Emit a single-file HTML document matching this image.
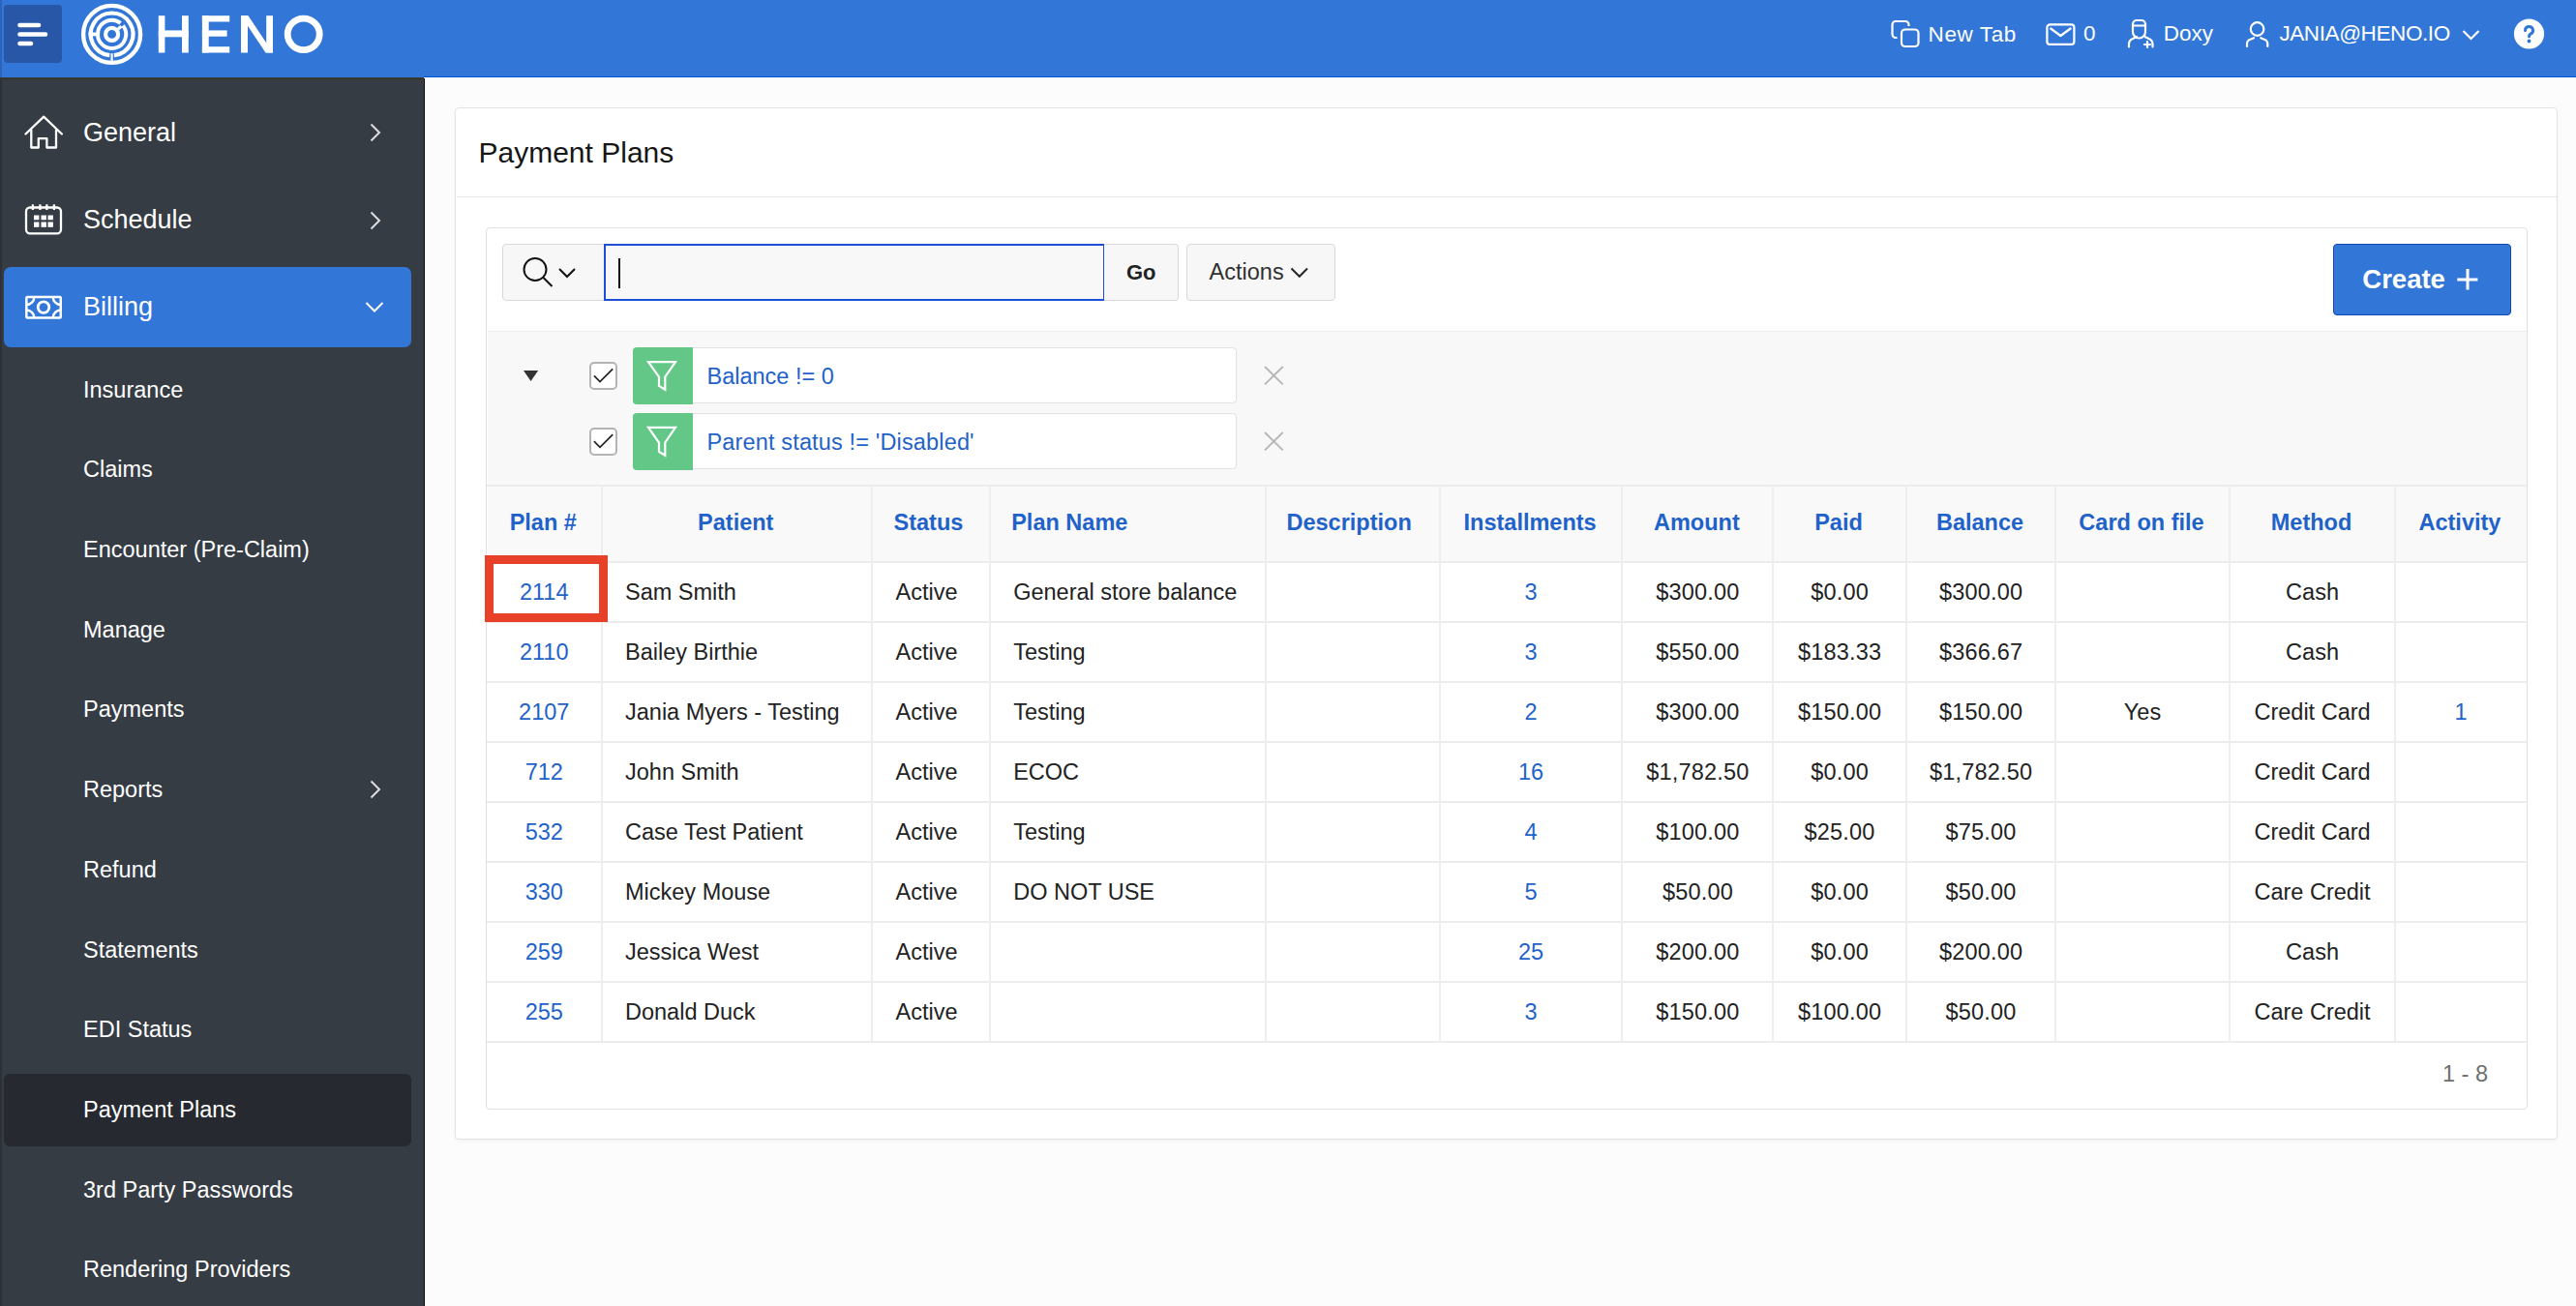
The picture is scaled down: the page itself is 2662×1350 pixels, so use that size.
<!DOCTYPE html>
<html><head><meta charset="utf-8"><title>Payment Plans</title>
<style>
html,body{margin:0;padding:0;width:2662px;height:1350px;overflow:hidden;background:#fcfcfc;}
body{position:relative;font-family:"Liberation Sans", sans-serif;}
.t{position:absolute;white-space:nowrap;}
.b{position:absolute;}
.s{position:absolute;overflow:visible;}
</style></head><body>
<div class="b" style="left:0.00px;top:0.00px;width:2662.00px;height:1350.00px;background:#fcfcfc;"></div>
<div class="b" style="left:0.00px;top:0.00px;width:2662.00px;height:79.50px;background:#3277d8;"></div>
<div class="b" style="left:438.00px;top:79.00px;width:2224.00px;height:1.00px;background:#0055d6;"></div>
<div class="b" style="left:0.00px;top:0.00px;width:2.00px;height:79.50px;background:#2b64b8;"></div>
<div class="b" style="left:0.00px;top:79.50px;width:438.00px;height:1270.50px;background:#363c44;"></div>
<div class="b" style="left:0.00px;top:80.80px;width:438.00px;height:1.20px;background:#33321a;"></div>
<div class="b" style="left:0.00px;top:81.00px;width:2.00px;height:1269.00px;background:#2c3138;"></div>
<div class="b" style="left:437.50px;top:80.50px;width:1.70px;height:1269.50px;background:#0b0b0b;"></div>
<div class="b" style="left:4.00px;top:5.00px;width:60.00px;height:60.00px;background:#2757a6;border-radius:4px;"></div>
<svg class="s" style="left:0px;top:0px;" width="70" height="70" viewBox="0 0 70 70"><g stroke="#fff" stroke-width="4.6" stroke-linecap="round"><line x1="20.5" y1="26" x2="40" y2="26"/><line x1="20.5" y1="35.5" x2="47" y2="35.5"/><line x1="20.5" y1="45" x2="32" y2="45"/></g></svg>
<svg class="s" style="left:80px;top:0px;" width="72" height="72" viewBox="0 0 72 72"><g fill="none" stroke="#fff"><circle cx="35.6" cy="35.4" r="29.5" stroke-width="4.4"/><path d="M33.31 57.18 A21.9 21.9 0 1 1 37.89 57.18" stroke-width="4.2"/><path d="M47.10 26.41 A14.6 14.6 0 1 1 44.59 23.90" stroke-width="3.9"/><circle cx="35.6" cy="35.4" r="6.5" stroke-width="4.1"/><line x1="42.03" y1="30.00" x2="45.41" y2="27.17" stroke-width="3.2"/><line x1="11.600000000000001" y1="35.4" x2="23.1" y2="35.4" stroke-width="3.8"/><line x1="35.6" y1="55.2" x2="35.6" y2="62.9" stroke-width="2.2"/></g></svg>
<svg class="s" style="left:160px;top:10px;" width="180" height="50" viewBox="0 0 180 50"><g fill="#fff"><rect x="3.8" y="6.2" width="6.6" height="38.3"/><rect x="28" y="6.2" width="6.8" height="38.3"/><rect x="3.8" y="21.4" width="31" height="6.9"/><rect x="48.9" y="6.2" width="6.8" height="38.3"/><rect x="48.9" y="6.2" width="28.3" height="6.3"/><rect x="48.9" y="21.4" width="25.7" height="6.3"/><rect x="48.9" y="38.2" width="28.3" height="6.3"/><rect x="89" y="6.2" width="7" height="38.3"/><rect x="115.2" y="6.2" width="6.8" height="38.3"/><polygon points="89,6.2 96.5,6.2 122,44.5 114.5,44.5"/></g><ellipse cx="153.7" cy="25.35" rx="16.5" ry="16.3" fill="none" stroke="#fff" stroke-width="6.8"/></svg>
<svg class="s" style="left:1950px;top:15px;" width="40" height="40" viewBox="0 0 40 40"><g fill="none" stroke="#fff" stroke-width="2.2"><path d="M10.5 24 h-1.5 a3.5 3.5 0 0 1 -3.5 -3.5 v-10 a3.5 3.5 0 0 1 3.5 -3.5 h10 a3.5 3.5 0 0 1 3.5 3.5 v1.5"/><rect x="15" y="15.5" width="17.5" height="17.5" rx="3.8"/></g></svg>
<div class="t" style="left:1992.60px;top:24.75px;font-size:22.5px;line-height:22.5px;color:#fff;letter-spacing:0.6px;">New Tab</div>
<svg class="s" style="left:2110px;top:15px;" width="40" height="40" viewBox="0 0 40 40"><g fill="none" stroke="#fff" stroke-width="2.2" stroke-linejoin="round"><rect x="5.4" y="10.3" width="28" height="20.6" rx="3"/><path d="M8.5 14 L19.4 22 L30.3 14"/></g></svg>
<div class="t" style="left:2152.90px;top:24.15px;font-size:22.5px;line-height:22.5px;color:#fff;">0</div>
<svg class="s" style="left:2195px;top:15px;" width="35" height="40" viewBox="0 0 35 40"><g fill="none" stroke="#fff" stroke-width="2.2" stroke-linecap="round"><path d="M9 18 v-8 a4 4 0 0 1 4 -4 h5 a4 4 0 0 1 4 4 v8 a6.5 6.5 0 0 1 -13 0 z"/><line x1="9" y1="11.5" x2="22" y2="11.5"/><path d="M5 33.5 v-3 a6 6 0 0 1 4 -5.5 l4 -2"/><path d="M29.5 33.5 v-3 a6 6 0 0 0 -4 -5.5 l-4 -2"/><line x1="24" y1="28" x2="24" y2="34"/><line x1="21" y1="31" x2="27" y2="31"/></g></svg>
<div class="t" style="left:2235.80px;top:23.95px;font-size:22.5px;line-height:22.5px;color:#fff;">Doxy</div>
<svg class="s" style="left:2315px;top:15px;" width="35" height="40" viewBox="0 0 35 40"><g fill="none" stroke="#fff" stroke-width="2.2" stroke-linecap="round"><circle cx="17.6" cy="15" r="6.8"/><path d="M7 33 v-2.5 a5 5 0 0 1 3.5 -4.8 l3.5 -1.5"/><path d="M28.3 33 v-2.5 a5 5 0 0 0 -3.5 -4.8 l-3.5 -1.5"/></g></svg>
<div class="t" style="left:2355.40px;top:24.25px;font-size:22.5px;line-height:22.5px;color:#fff;letter-spacing:-0.4px;">JANIA@HENO.IO</div>
<svg class="s" style="left:2540px;top:25px;" width="30" height="20" viewBox="0 0 30 20"><path d="M5.5 7 L13.5 15 L21.5 7" fill="none" stroke="#fff" stroke-width="2.2"/></svg>
<svg class="s" style="left:2596px;top:18px;" width="36" height="36" viewBox="0 0 36 36"><circle cx="17.5" cy="17" r="15.6" fill="#fff"/><path d="M13.5 13.5 a4 4 0 1 1 5.5 3.7 c-1.2 0.6 -1.5 1.2 -1.5 2.6" fill="none" stroke="#3277d8" stroke-width="3" stroke-linecap="round"/><circle cx="17.5" cy="24.5" r="1.9" fill="#3277d8"/></svg>
<div class="b" style="left:4.00px;top:276.00px;width:421.00px;height:83.00px;background:#3277d8;border-radius:7px;"></div>
<div class="b" style="left:4.00px;top:1110.00px;width:420.50px;height:74.50px;background:#262a30;border-radius:6px;"></div>
<div class="t" style="left:86.00px;top:123.84px;font-size:27px;line-height:27px;color:#fff;">General</div>
<div class="t" style="left:86.00px;top:213.94px;font-size:27px;line-height:27px;color:#fff;">Schedule</div>
<div class="t" style="left:86.00px;top:304.14px;font-size:27px;line-height:27px;color:#fff;">Billing</div>
<div class="t" style="left:86.00px;top:391.81px;font-size:23.5px;line-height:23.5px;color:#fff;">Insurance</div>
<div class="t" style="left:86.00px;top:474.48px;font-size:23.5px;line-height:23.5px;color:#fff;">Claims</div>
<div class="t" style="left:86.00px;top:557.15px;font-size:23.5px;line-height:23.5px;color:#fff;">Encounter (Pre-Claim)</div>
<div class="t" style="left:86.00px;top:639.82px;font-size:23.5px;line-height:23.5px;color:#fff;">Manage</div>
<div class="t" style="left:86.00px;top:722.49px;font-size:23.5px;line-height:23.5px;color:#fff;">Payments</div>
<div class="t" style="left:86.00px;top:805.16px;font-size:23.5px;line-height:23.5px;color:#fff;">Reports</div>
<div class="t" style="left:86.00px;top:887.83px;font-size:23.5px;line-height:23.5px;color:#fff;">Refund</div>
<div class="t" style="left:86.00px;top:970.50px;font-size:23.5px;line-height:23.5px;color:#fff;">Statements</div>
<div class="t" style="left:86.00px;top:1053.17px;font-size:23.5px;line-height:23.5px;color:#fff;">EDI Status</div>
<div class="t" style="left:86.00px;top:1135.84px;font-size:23.5px;line-height:23.5px;color:#fff;">Payment Plans</div>
<div class="t" style="left:86.00px;top:1218.51px;font-size:23.5px;line-height:23.5px;color:#fff;">3rd Party Passwords</div>
<div class="t" style="left:86.00px;top:1301.18px;font-size:23.5px;line-height:23.5px;color:#fff;">Rendering Providers</div>
<svg class="s" style="left:20px;top:110px;" width="50" height="50" viewBox="0 0 50 50"><g fill="none" stroke="#fff" stroke-width="2.3" stroke-linejoin="round" stroke-linecap="round"><path d="M6.5 28.5 L25.2 10.7 L43.9 28.5"/><path d="M12.3 24.5 V42.5 H19.8 V33.2 H28.4 V42.5 H38 V24.5"/></g></svg>
<svg class="s" style="left:20px;top:205px;" width="50" height="45" viewBox="0 0 50 45"><g fill="none" stroke="#fff" stroke-width="2.3"><rect x="7" y="9.5" width="36" height="26.8" rx="4"/><line x1="13.9" y1="6.3" x2="13.9" y2="12"/><line x1="21.4" y1="6.3" x2="21.4" y2="12"/><line x1="28.4" y1="6.3" x2="28.4" y2="12"/><line x1="35.9" y1="6.3" x2="35.9" y2="12"/></g><g fill="#fff"><rect x="15" y="17.5" width="5.4" height="4.8"/><rect x="22.5" y="17.5" width="5.4" height="4.8"/><rect x="29.5" y="17.5" width="5.4" height="4.8"/><rect x="15" y="24.5" width="5.4" height="5.3"/><rect x="22.5" y="24.5" width="5.4" height="5.3"/><rect x="29.5" y="24.5" width="5.4" height="5.3"/></g></svg>
<svg class="s" style="left:20px;top:300px;" width="50" height="36" viewBox="0 0 50 36"><g fill="none" stroke="#fff" stroke-width="2.5"><rect x="7.35" y="7.05" width="35.40" height="21.50" rx="1"/><circle cx="25" cy="17.6" r="5.8" stroke-width="2.8"/><path d="M7.35 15.05 A8 8 0 0 0 15.35 7.05 M34.75 7.05 A8 8 0 0 0 42.75 15.05 M7.35 20.55 A8 8 0 0 1 15.35 28.55 M34.75 28.55 A8 8 0 0 1 42.75 20.55"/></g></svg>
<svg class="s" style="left:378px;top:124.5px;" width="20" height="24" viewBox="0 0 20 24"><path d="M5.5 3.5 L14 12 L5.5 20.5" fill="none" stroke="#ddd" stroke-width="2"/></svg>
<svg class="s" style="left:378px;top:215.5px;" width="20" height="24" viewBox="0 0 20 24"><path d="M5.5 3.5 L14 12 L5.5 20.5" fill="none" stroke="#ddd" stroke-width="2"/></svg>
<svg class="s" style="left:378px;top:804px;" width="20" height="24" viewBox="0 0 20 24"><path d="M5.5 3.5 L14 12 L5.5 20.5" fill="none" stroke="#ddd" stroke-width="2"/></svg>
<svg class="s" style="left:376px;top:308px;" width="22" height="20" viewBox="0 0 22 20"><path d="M2.5 5 L11 13.5 L19.5 5" fill="none" stroke="#fff" stroke-width="2"/></svg>
<div class="b" style="left:469.80px;top:111.00px;width:2173.20px;height:1067.30px;background:#fff;border:1.5px solid #e3e3e3;border-radius:4px;box-sizing:border-box;box-shadow:0 2px 4px rgba(0,0,0,0.035);"></div>
<div class="b" style="left:471.50px;top:203.00px;width:2170.50px;height:1.00px;background:#e8e8e8;"></div>
<div class="t" style="left:494.50px;top:143.10px;font-size:30px;line-height:30px;color:#161616;">Payment Plans</div>
<div class="b" style="left:502.00px;top:235.00px;width:2109.50px;height:911.50px;background:#fff;border:1.5px solid #e0e0e0;border-radius:4px;box-sizing:border-box;"></div>
<div class="b" style="left:503.50px;top:342.00px;width:2107.00px;height:160.00px;background:#f8f8f8;border-top:1px solid #ececec;box-sizing:border-box;"></div>
<div class="b" style="left:519.00px;top:252.00px;width:107.00px;height:59.00px;background:#f7f7f7;border:1px solid #d8d8d8;border-radius:4px 0 0 4px;box-sizing:border-box;"></div>
<svg class="s" style="left:540px;top:262px;" width="70" height="40" viewBox="0 0 70 40"><g fill="none" stroke="#111" stroke-width="2"><circle cx="13" cy="16.5" r="11.5"/><line x1="21.5" y1="25" x2="30.5" y2="34"/><path d="M38 16 L46 24 L54 16"/></g></svg>
<div class="b" style="left:623.50px;top:252.00px;width:518.50px;height:59.00px;background:#f8f8f8;border:2px solid #1f4fd8;box-sizing:border-box;"></div>
<div class="b" style="left:638.50px;top:266.50px;width:2.00px;height:31.00px;background:#111;"></div>
<div class="b" style="left:1141.00px;top:252.00px;width:76.50px;height:59.00px;background:#f7f7f7;border:1px solid #d8d8d8;border-left:none;border-radius:0 4px 4px 0;box-sizing:border-box;"></div>
<div class="t" style="left:1141.00px;top:271.38px;font-size:22px;line-height:22px;color:#222;font-weight:bold;width:76.50px;text-align:center;">Go</div>
<div class="b" style="left:1226.00px;top:252.00px;width:154.00px;height:59.00px;background:#f7f7f7;border:1px solid #d8d8d8;border-radius:4px;box-sizing:border-box;"></div>
<div class="t" style="left:1249.60px;top:270.41px;font-size:23.5px;line-height:23.5px;color:#303030;">Actions</div>
<svg class="s" style="left:1330px;top:270px;" width="26" height="22" viewBox="0 0 26 22"><path d="M4.5 7.5 L12.8 15.8 L21 7.5" fill="none" stroke="#262626" stroke-width="2"/></svg>
<div class="b" style="left:2411.00px;top:252.00px;width:184.00px;height:74.00px;background:#3277d8;border:1.5px solid #0f47b4;border-radius:4px;box-sizing:border-box;"></div>
<div class="t" style="left:2441.30px;top:275.42px;font-size:27.5px;line-height:27.5px;color:#fff;font-weight:bold;">Create</div>
<svg class="s" style="left:2535px;top:274px;" width="30" height="30" viewBox="0 0 30 30"><g stroke="#fff" stroke-width="3"><line x1="4.3" y1="15" x2="25.4" y2="15"/><line x1="15" y1="4" x2="15" y2="25.5"/></g></svg>
<svg class="s" style="left:535px;top:375px;" width="28" height="25" viewBox="0 0 28 25"><polygon points="6,7.9 21.1,7.9 13.6,18.9" fill="#333"/></svg>
<div class="b" style="left:609.00px;top:373.95px;width:29.00px;height:29.00px;background:#fff;border:2px solid #b4b4b4;border-radius:5px;box-sizing:border-box;"></div>
<svg class="s" style="left:606px;top:370px;" width="36" height="36" viewBox="0 0 36 36"><path d="M7.9 18.45 L14 24.55 L27.2 11.45" fill="none" stroke="#222" stroke-width="1.7"/></svg>
<div class="b" style="left:654.00px;top:359.40px;width:624.00px;height:58.10px;background:#fff;border:1px solid #e2e2e2;border-radius:4px;box-sizing:border-box;"></div>
<div class="b" style="left:654.00px;top:358.90px;width:61.50px;height:59.10px;background:#63c787;border-radius:4px 0 0 4px;"></div>
<svg class="s" style="left:654px;top:359px;" width="62" height="60" viewBox="0 0 62 60"><path d="M16 15.2 H44 L33.3 30.5 V43.8 L27 40.0 V30.5 Z" fill="none" stroke="#fff" stroke-width="2.2" stroke-linejoin="miter"/></svg>
<div class="t" style="left:730.50px;top:377.76px;font-size:23.5px;line-height:23.5px;color:#1f62c9;">Balance != 0</div>
<svg class="s" style="left:1300px;top:372px;" width="34" height="34" viewBox="0 0 34 34"><g stroke="#b5b5b5" stroke-width="1.8"><line x1="7" y1="7" x2="25.7" y2="25.4"/><line x1="25.7" y1="7" x2="7" y2="25.4"/></g></svg>
<div class="b" style="left:609.00px;top:441.70px;width:29.00px;height:29.00px;background:#fff;border:2px solid #b4b4b4;border-radius:5px;box-sizing:border-box;"></div>
<svg class="s" style="left:606px;top:438px;" width="36" height="36" viewBox="0 0 36 36"><path d="M7.9 18.20 L14 24.30 L27.2 11.20" fill="none" stroke="#222" stroke-width="1.7"/></svg>
<div class="b" style="left:654.00px;top:427.00px;width:624.00px;height:58.40px;background:#fff;border:1px solid #e2e2e2;border-radius:4px;box-sizing:border-box;"></div>
<div class="b" style="left:654.00px;top:426.50px;width:61.50px;height:59.40px;background:#63c787;border-radius:4px 0 0 4px;"></div>
<svg class="s" style="left:654px;top:427px;" width="62" height="60" viewBox="0 0 62 60"><path d="M16 14.8 H44 L33.3 30.5 V43.8 L27 40.0 V30.5 Z" fill="none" stroke="#fff" stroke-width="2.2" stroke-linejoin="miter"/></svg>
<div class="t" style="left:730.50px;top:445.51px;font-size:23.5px;line-height:23.5px;color:#1f62c9;letter-spacing:0.15px;">Parent status != 'Disabled'</div>
<svg class="s" style="left:1300px;top:440px;" width="34" height="34" viewBox="0 0 34 34"><g stroke="#b5b5b5" stroke-width="1.8"><line x1="7" y1="7" x2="25.7" y2="25.4"/><line x1="25.7" y1="7" x2="7" y2="25.4"/></g></svg>
<div class="b" style="left:503.50px;top:502.00px;width:2107.00px;height:79.00px;background:#f9f9f9;"></div>
<div class="b" style="left:503.00px;top:501.00px;width:2108.00px;height:2.00px;background:#ececec;"></div>
<div class="b" style="left:503.00px;top:580.00px;width:2108.00px;height:2.00px;background:#ececec;"></div>
<div class="b" style="left:503.00px;top:642.00px;width:2108.00px;height:2.00px;background:#ececec;"></div>
<div class="b" style="left:503.00px;top:704.00px;width:2108.00px;height:2.00px;background:#ececec;"></div>
<div class="b" style="left:503.00px;top:766.00px;width:2108.00px;height:2.00px;background:#ececec;"></div>
<div class="b" style="left:503.00px;top:828.00px;width:2108.00px;height:2.00px;background:#ececec;"></div>
<div class="b" style="left:503.00px;top:890.00px;width:2108.00px;height:2.00px;background:#ececec;"></div>
<div class="b" style="left:503.00px;top:952.00px;width:2108.00px;height:2.00px;background:#ececec;"></div>
<div class="b" style="left:503.00px;top:1014.00px;width:2108.00px;height:2.00px;background:#ececec;"></div>
<div class="b" style="left:503.00px;top:1076.00px;width:2108.00px;height:2.00px;background:#ececec;"></div>
<div class="b" style="left:620.50px;top:502.00px;width:2.00px;height:575.00px;background:#eeeeee;"></div>
<div class="b" style="left:900.00px;top:502.00px;width:2.00px;height:575.00px;background:#eeeeee;"></div>
<div class="b" style="left:1021.70px;top:502.00px;width:2.00px;height:575.00px;background:#eeeeee;"></div>
<div class="b" style="left:1306.50px;top:502.00px;width:2.00px;height:575.00px;background:#eeeeee;"></div>
<div class="b" style="left:1486.80px;top:502.00px;width:2.00px;height:575.00px;background:#eeeeee;"></div>
<div class="b" style="left:1675.40px;top:502.00px;width:2.00px;height:575.00px;background:#eeeeee;"></div>
<div class="b" style="left:1831.30px;top:502.00px;width:2.00px;height:575.00px;background:#eeeeee;"></div>
<div class="b" style="left:1968.70px;top:502.00px;width:2.00px;height:575.00px;background:#eeeeee;"></div>
<div class="b" style="left:2123.30px;top:502.00px;width:2.00px;height:575.00px;background:#eeeeee;"></div>
<div class="b" style="left:2302.70px;top:502.00px;width:2.00px;height:575.00px;background:#eeeeee;"></div>
<div class="b" style="left:2474.40px;top:502.00px;width:2.00px;height:575.00px;background:#eeeeee;"></div>
<div class="t" style="left:502.00px;top:528.71px;font-size:23.5px;line-height:23.5px;color:#1f62c9;font-weight:bold;width:118.50px;text-align:center;">Plan #</div>
<div class="t" style="left:620.50px;top:528.71px;font-size:23.5px;line-height:23.5px;color:#1f62c9;font-weight:bold;width:279.50px;text-align:center;">Patient</div>
<div class="t" style="left:923.50px;top:528.71px;font-size:23.5px;line-height:23.5px;color:#1f62c9;font-weight:bold;">Status</div>
<div class="t" style="left:1045.20px;top:528.71px;font-size:23.5px;line-height:23.5px;color:#1f62c9;font-weight:bold;">Plan Name</div>
<div class="t" style="left:1304.00px;top:528.71px;font-size:23.5px;line-height:23.5px;color:#1f62c9;font-weight:bold;width:180.30px;text-align:center;">Description</div>
<div class="t" style="left:1486.80px;top:528.71px;font-size:23.5px;line-height:23.5px;color:#1f62c9;font-weight:bold;width:188.60px;text-align:center;">Installments</div>
<div class="t" style="left:1675.40px;top:528.71px;font-size:23.5px;line-height:23.5px;color:#1f62c9;font-weight:bold;width:155.90px;text-align:center;">Amount</div>
<div class="t" style="left:1831.30px;top:528.71px;font-size:23.5px;line-height:23.5px;color:#1f62c9;font-weight:bold;width:137.40px;text-align:center;">Paid</div>
<div class="t" style="left:1968.70px;top:528.71px;font-size:23.5px;line-height:23.5px;color:#1f62c9;font-weight:bold;width:154.60px;text-align:center;">Balance</div>
<div class="t" style="left:2123.30px;top:528.71px;font-size:23.5px;line-height:23.5px;color:#1f62c9;font-weight:bold;width:179.40px;text-align:center;">Card on file</div>
<div class="t" style="left:2302.70px;top:528.71px;font-size:23.5px;line-height:23.5px;color:#1f62c9;font-weight:bold;width:171.70px;text-align:center;">Method</div>
<div class="t" style="left:2474.40px;top:528.71px;font-size:23.5px;line-height:23.5px;color:#1f62c9;font-weight:bold;width:135.10px;text-align:center;">Activity</div>
<div class="t" style="left:503.00px;top:601.11px;font-size:23.5px;line-height:23.5px;color:#1f62c9;width:118.50px;text-align:center;">2114</div>
<div class="t" style="left:646.00px;top:601.11px;font-size:23.5px;line-height:23.5px;color:#222;">Sam Smith</div>
<div class="t" style="left:925.50px;top:601.11px;font-size:23.5px;line-height:23.5px;color:#222;">Active</div>
<div class="t" style="left:1047.20px;top:601.11px;font-size:23.5px;line-height:23.5px;color:#222;">General store balance</div>
<div class="t" style="left:1487.80px;top:601.11px;font-size:23.5px;line-height:23.5px;color:#1f62c9;width:188.60px;text-align:center;">3</div>
<div class="t" style="left:1676.40px;top:601.11px;font-size:23.5px;line-height:23.5px;color:#222;width:155.90px;text-align:center;letter-spacing:0.2px;text-indent:0.2px;">$300.00</div>
<div class="t" style="left:1832.30px;top:601.11px;font-size:23.5px;line-height:23.5px;color:#222;width:137.40px;text-align:center;letter-spacing:0.2px;text-indent:0.2px;">$0.00</div>
<div class="t" style="left:1969.70px;top:601.11px;font-size:23.5px;line-height:23.5px;color:#222;width:154.60px;text-align:center;letter-spacing:0.2px;text-indent:0.2px;">$300.00</div>
<div class="t" style="left:2303.70px;top:601.11px;font-size:23.5px;line-height:23.5px;color:#222;width:171.70px;text-align:center;">Cash</div>
<div class="t" style="left:503.00px;top:663.11px;font-size:23.5px;line-height:23.5px;color:#1f62c9;width:118.50px;text-align:center;">2110</div>
<div class="t" style="left:646.00px;top:663.11px;font-size:23.5px;line-height:23.5px;color:#222;">Bailey Birthie</div>
<div class="t" style="left:925.50px;top:663.11px;font-size:23.5px;line-height:23.5px;color:#222;">Active</div>
<div class="t" style="left:1047.20px;top:663.11px;font-size:23.5px;line-height:23.5px;color:#222;">Testing</div>
<div class="t" style="left:1487.80px;top:663.11px;font-size:23.5px;line-height:23.5px;color:#1f62c9;width:188.60px;text-align:center;">3</div>
<div class="t" style="left:1676.40px;top:663.11px;font-size:23.5px;line-height:23.5px;color:#222;width:155.90px;text-align:center;letter-spacing:0.2px;text-indent:0.2px;">$550.00</div>
<div class="t" style="left:1832.30px;top:663.11px;font-size:23.5px;line-height:23.5px;color:#222;width:137.40px;text-align:center;letter-spacing:0.2px;text-indent:0.2px;">$183.33</div>
<div class="t" style="left:1969.70px;top:663.11px;font-size:23.5px;line-height:23.5px;color:#222;width:154.60px;text-align:center;letter-spacing:0.2px;text-indent:0.2px;">$366.67</div>
<div class="t" style="left:2303.70px;top:663.11px;font-size:23.5px;line-height:23.5px;color:#222;width:171.70px;text-align:center;">Cash</div>
<div class="t" style="left:503.00px;top:725.11px;font-size:23.5px;line-height:23.5px;color:#1f62c9;width:118.50px;text-align:center;">2107</div>
<div class="t" style="left:646.00px;top:725.11px;font-size:23.5px;line-height:23.5px;color:#222;">Jania Myers - Testing</div>
<div class="t" style="left:925.50px;top:725.11px;font-size:23.5px;line-height:23.5px;color:#222;">Active</div>
<div class="t" style="left:1047.20px;top:725.11px;font-size:23.5px;line-height:23.5px;color:#222;">Testing</div>
<div class="t" style="left:1487.80px;top:725.11px;font-size:23.5px;line-height:23.5px;color:#1f62c9;width:188.60px;text-align:center;">2</div>
<div class="t" style="left:1676.40px;top:725.11px;font-size:23.5px;line-height:23.5px;color:#222;width:155.90px;text-align:center;letter-spacing:0.2px;text-indent:0.2px;">$300.00</div>
<div class="t" style="left:1832.30px;top:725.11px;font-size:23.5px;line-height:23.5px;color:#222;width:137.40px;text-align:center;letter-spacing:0.2px;text-indent:0.2px;">$150.00</div>
<div class="t" style="left:1969.70px;top:725.11px;font-size:23.5px;line-height:23.5px;color:#222;width:154.60px;text-align:center;letter-spacing:0.2px;text-indent:0.2px;">$150.00</div>
<div class="t" style="left:2124.30px;top:725.11px;font-size:23.5px;line-height:23.5px;color:#222;width:179.40px;text-align:center;">Yes</div>
<div class="t" style="left:2303.70px;top:725.11px;font-size:23.5px;line-height:23.5px;color:#222;width:171.70px;text-align:center;">Credit Card</div>
<div class="t" style="left:2475.40px;top:725.11px;font-size:23.5px;line-height:23.5px;color:#1f62c9;width:135.10px;text-align:center;">1</div>
<div class="t" style="left:503.00px;top:787.11px;font-size:23.5px;line-height:23.5px;color:#1f62c9;width:118.50px;text-align:center;">712</div>
<div class="t" style="left:646.00px;top:787.11px;font-size:23.5px;line-height:23.5px;color:#222;">John Smith</div>
<div class="t" style="left:925.50px;top:787.11px;font-size:23.5px;line-height:23.5px;color:#222;">Active</div>
<div class="t" style="left:1047.20px;top:787.11px;font-size:23.5px;line-height:23.5px;color:#222;">ECOC</div>
<div class="t" style="left:1487.80px;top:787.11px;font-size:23.5px;line-height:23.5px;color:#1f62c9;width:188.60px;text-align:center;">16</div>
<div class="t" style="left:1676.40px;top:787.11px;font-size:23.5px;line-height:23.5px;color:#222;width:155.90px;text-align:center;letter-spacing:0.2px;text-indent:0.2px;">$1,782.50</div>
<div class="t" style="left:1832.30px;top:787.11px;font-size:23.5px;line-height:23.5px;color:#222;width:137.40px;text-align:center;letter-spacing:0.2px;text-indent:0.2px;">$0.00</div>
<div class="t" style="left:1969.70px;top:787.11px;font-size:23.5px;line-height:23.5px;color:#222;width:154.60px;text-align:center;letter-spacing:0.2px;text-indent:0.2px;">$1,782.50</div>
<div class="t" style="left:2303.70px;top:787.11px;font-size:23.5px;line-height:23.5px;color:#222;width:171.70px;text-align:center;">Credit Card</div>
<div class="t" style="left:503.00px;top:849.11px;font-size:23.5px;line-height:23.5px;color:#1f62c9;width:118.50px;text-align:center;">532</div>
<div class="t" style="left:646.00px;top:849.11px;font-size:23.5px;line-height:23.5px;color:#222;">Case Test Patient</div>
<div class="t" style="left:925.50px;top:849.11px;font-size:23.5px;line-height:23.5px;color:#222;">Active</div>
<div class="t" style="left:1047.20px;top:849.11px;font-size:23.5px;line-height:23.5px;color:#222;">Testing</div>
<div class="t" style="left:1487.80px;top:849.11px;font-size:23.5px;line-height:23.5px;color:#1f62c9;width:188.60px;text-align:center;">4</div>
<div class="t" style="left:1676.40px;top:849.11px;font-size:23.5px;line-height:23.5px;color:#222;width:155.90px;text-align:center;letter-spacing:0.2px;text-indent:0.2px;">$100.00</div>
<div class="t" style="left:1832.30px;top:849.11px;font-size:23.5px;line-height:23.5px;color:#222;width:137.40px;text-align:center;letter-spacing:0.2px;text-indent:0.2px;">$25.00</div>
<div class="t" style="left:1969.70px;top:849.11px;font-size:23.5px;line-height:23.5px;color:#222;width:154.60px;text-align:center;letter-spacing:0.2px;text-indent:0.2px;">$75.00</div>
<div class="t" style="left:2303.70px;top:849.11px;font-size:23.5px;line-height:23.5px;color:#222;width:171.70px;text-align:center;">Credit Card</div>
<div class="t" style="left:503.00px;top:911.11px;font-size:23.5px;line-height:23.5px;color:#1f62c9;width:118.50px;text-align:center;">330</div>
<div class="t" style="left:646.00px;top:911.11px;font-size:23.5px;line-height:23.5px;color:#222;">Mickey Mouse</div>
<div class="t" style="left:925.50px;top:911.11px;font-size:23.5px;line-height:23.5px;color:#222;">Active</div>
<div class="t" style="left:1047.20px;top:911.11px;font-size:23.5px;line-height:23.5px;color:#222;">DO NOT USE</div>
<div class="t" style="left:1487.80px;top:911.11px;font-size:23.5px;line-height:23.5px;color:#1f62c9;width:188.60px;text-align:center;">5</div>
<div class="t" style="left:1676.40px;top:911.11px;font-size:23.5px;line-height:23.5px;color:#222;width:155.90px;text-align:center;letter-spacing:0.2px;text-indent:0.2px;">$50.00</div>
<div class="t" style="left:1832.30px;top:911.11px;font-size:23.5px;line-height:23.5px;color:#222;width:137.40px;text-align:center;letter-spacing:0.2px;text-indent:0.2px;">$0.00</div>
<div class="t" style="left:1969.70px;top:911.11px;font-size:23.5px;line-height:23.5px;color:#222;width:154.60px;text-align:center;letter-spacing:0.2px;text-indent:0.2px;">$50.00</div>
<div class="t" style="left:2303.70px;top:911.11px;font-size:23.5px;line-height:23.5px;color:#222;width:171.70px;text-align:center;">Care Credit</div>
<div class="t" style="left:503.00px;top:973.11px;font-size:23.5px;line-height:23.5px;color:#1f62c9;width:118.50px;text-align:center;">259</div>
<div class="t" style="left:646.00px;top:973.11px;font-size:23.5px;line-height:23.5px;color:#222;">Jessica West</div>
<div class="t" style="left:925.50px;top:973.11px;font-size:23.5px;line-height:23.5px;color:#222;">Active</div>
<div class="t" style="left:1487.80px;top:973.11px;font-size:23.5px;line-height:23.5px;color:#1f62c9;width:188.60px;text-align:center;">25</div>
<div class="t" style="left:1676.40px;top:973.11px;font-size:23.5px;line-height:23.5px;color:#222;width:155.90px;text-align:center;letter-spacing:0.2px;text-indent:0.2px;">$200.00</div>
<div class="t" style="left:1832.30px;top:973.11px;font-size:23.5px;line-height:23.5px;color:#222;width:137.40px;text-align:center;letter-spacing:0.2px;text-indent:0.2px;">$0.00</div>
<div class="t" style="left:1969.70px;top:973.11px;font-size:23.5px;line-height:23.5px;color:#222;width:154.60px;text-align:center;letter-spacing:0.2px;text-indent:0.2px;">$200.00</div>
<div class="t" style="left:2303.70px;top:973.11px;font-size:23.5px;line-height:23.5px;color:#222;width:171.70px;text-align:center;">Cash</div>
<div class="t" style="left:503.00px;top:1035.11px;font-size:23.5px;line-height:23.5px;color:#1f62c9;width:118.50px;text-align:center;">255</div>
<div class="t" style="left:646.00px;top:1035.11px;font-size:23.5px;line-height:23.5px;color:#222;">Donald Duck</div>
<div class="t" style="left:925.50px;top:1035.11px;font-size:23.5px;line-height:23.5px;color:#222;">Active</div>
<div class="t" style="left:1487.80px;top:1035.11px;font-size:23.5px;line-height:23.5px;color:#1f62c9;width:188.60px;text-align:center;">3</div>
<div class="t" style="left:1676.40px;top:1035.11px;font-size:23.5px;line-height:23.5px;color:#222;width:155.90px;text-align:center;letter-spacing:0.2px;text-indent:0.2px;">$150.00</div>
<div class="t" style="left:1832.30px;top:1035.11px;font-size:23.5px;line-height:23.5px;color:#222;width:137.40px;text-align:center;letter-spacing:0.2px;text-indent:0.2px;">$100.00</div>
<div class="t" style="left:1969.70px;top:1035.11px;font-size:23.5px;line-height:23.5px;color:#222;width:154.60px;text-align:center;letter-spacing:0.2px;text-indent:0.2px;">$50.00</div>
<div class="t" style="left:2303.70px;top:1035.11px;font-size:23.5px;line-height:23.5px;color:#222;width:171.70px;text-align:center;">Care Credit</div>
<div class="t" style="left:2300.00px;top:1099.11px;font-size:23.5px;line-height:23.5px;color:#6e6e6e;width:271.00px;text-align:right;">1 - 8</div>
<div class="b" style="left:501.00px;top:574.00px;width:127.00px;height:69.00px;border:9px solid #e8412a;box-sizing:border-box;"></div>
</body></html>
